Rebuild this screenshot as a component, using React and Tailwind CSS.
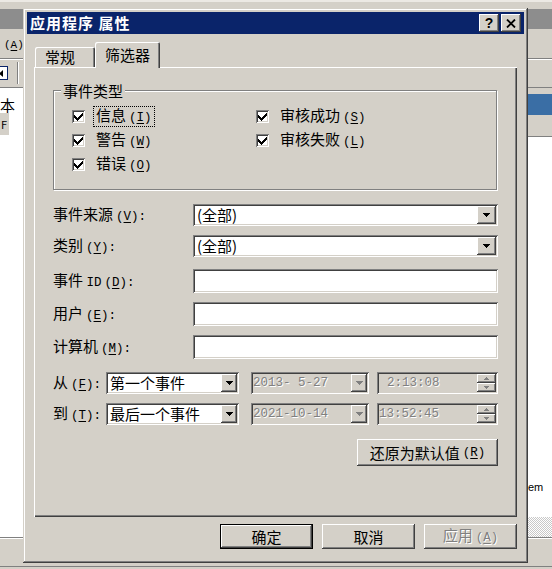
import React from 'react';

// classic 3D borders
const raised = 'shadow-[inset_-1px_-1px_0_#404040,inset_1px_1px_0_#ffffff,inset_-2px_-2px_0_#808080,inset_2px_2px_0_#d4d0c8]';
const sunken = 'shadow-[inset_1px_1px_0_#808080,inset_-1px_-1px_0_#ffffff,inset_2px_2px_0_#404040,inset_-2px_-2px_0_#d4d0c8]';
const dim = 'text-[#808080] [text-shadow:1px_1px_0_#ffffff]';

// mnemonic like (V):
const Key = ({ k, tail = '' }) => (
  <span className="ml-[3px] font-['Liberation_Mono',monospace] text-[12.5px]">
    (<span className="underline underline-offset-[2px]">{k}</span>){tail}
  </span>
);

const Arrow = ({ color = '#000000' }) => (
  <svg width="7" height="4" viewBox="0 0 7 4">
    <path d="M0 0h7v1h-1v1h-1v1h-1v1h-1v-1h-1v-1h-1v-1h-1z" fill={color} />
  </svg>
);

const Check = () => (
  <svg width="13" height="13" viewBox="0 0 13 13">
    <path d="M2 5h1v3H2z M3 6h1v3H3z M4 7h1v3H4z M5 8h1v3H5z M6 7h1v3H6z M7 6h1v3H7z M8 5h1v3H8z M9 4h1v3H9z M10 3h1v3h-1z" fill="#000000" />
  </svg>
);

const CheckItem = ({ label, k, focused }) => (
  <div className="flex items-center h-[24px]">
    <div className={`w-[13px] h-[13px] bg-white shrink-0 ${sunken}`}>
      <Check />
    </div>
    <span className={`ml-[8px] px-[2px] leading-[16px] border border-dotted ${focused ? 'border-black' : 'border-transparent'}`}>
      {label}
      <Key k={k} />
    </span>
  </div>
);

const DropBtn = ({ className, disabled }) => (
  <div className={`bg-[#d4d0c8] flex items-center justify-center shrink-0 ${raised} ${className}`}>
    <Arrow color={disabled ? '#808080' : '#000000'} />
  </div>
);

const Row = ({ children, className = '' }) => (
  <div className={`flex items-center ${className}`}>{children}</div>
);

const TitleBar = () => (
  <div className="h-[22px] bg-[#0a246a] flex items-center pl-[3px] pr-[3px]">
    <span className="text-white font-bold text-[15px] tracking-[1px]">应用程序 属性</span>
    <div className="ml-auto flex gap-[2px]">
      <div className={`w-[20px] h-[18px] bg-[#d4d0c8] flex items-center justify-center font-['Liberation_Sans',sans-serif] font-bold text-[14px] leading-none ${raised}`}>
        ?
      </div>
      <div className={`w-[20px] h-[18px] bg-[#d4d0c8] flex items-center justify-center ${raised}`}>
        <svg width="10" height="9" viewBox="0 0 10 9">
          <path d="M1 0.5l8 8M9 0.5l-8 8" stroke="#000000" strokeWidth="1.8" />
        </svg>
      </div>
    </div>
  </div>
);

const Spinner = () => (
  <div className="flex flex-col shrink-0">
    <div className={`w-[19px] h-[9px] bg-[#d4d0c8] flex items-center justify-center ${raised}`}>
      <svg width="5" height="3" viewBox="0 0 5 3"><path d="M2 0h1v1h1v1h1v1H0V2h1V1h1z" fill="#808080" /></svg>
    </div>
    <div className={`w-[19px] h-[9px] bg-[#d4d0c8] flex items-center justify-center ${raised}`}>
      <svg width="5" height="3" viewBox="0 0 5 3"><path d="M0 0h5v1H4v1H3v1H2V2H1V1H0z" fill="#808080" /></svg>
    </div>
  </div>
);

const FromToRow = ({ label, k, event, date, time, timePad, className }) => (
  <Row className={`h-[22px] ${className}`}>
    <span className="w-[53px] shrink-0">{label}<Key k={k} tail=":" /></span>
    <div className={`w-[133px] h-[22px] bg-white flex items-center pl-[4px] pr-[2px] ${sunken}`}>
      <span>{event}</span>
      <DropBtn className="ml-auto w-[16px] h-[18px]" />
    </div>
    <div className={`ml-[12px] w-[118px] h-[22px] bg-[#d4d0c8] flex items-center pl-[2px] pr-[2px] ${sunken}`}>
      <span className={`whitespace-pre font-['Liberation_Mono',monospace] text-[12.5px] ${dim}`}>{date}</span>
      <DropBtn className="ml-auto w-[16px] h-[18px]" disabled />
    </div>
    <div className={`ml-[8px] flex-1 h-[22px] bg-[#d4d0c8] flex items-center pr-[2px] ${timePad} ${sunken}`}>
      <span className={`font-['Liberation_Mono',monospace] text-[12.5px] ${dim}`}>{time}</span>
      <div className="ml-auto"><Spinner /></div>
    </div>
  </Row>
);

const FilterPanel = () => (
  <div className="h-[450px] pt-[23px] px-[19px] flex flex-col shadow-[inset_1px_1px_0_#ffffff,inset_-1px_-1px_0_#404040,inset_-2px_-2px_0_#808080]">
    {/* event types group */}
    <div className="relative h-[100px] mr-[1px] border border-[#808080] shadow-[inset_1px_1px_0_#ffffff,1px_1px_0_#ffffff]">
      <span className="absolute left-[7px] -top-[9px] px-[2px] bg-[#d4d0c8] leading-[18px]">事件类型</span>
      <div className="pt-[13px] pl-[18px] grid grid-cols-[184px_1fr]">
        <CheckItem label="信息" k="I" focused />
        <CheckItem label="审核成功" k="S" />
        <CheckItem label="警告" k="W" />
        <CheckItem label="审核失败" k="L" />
        <CheckItem label="错误" k="O" />
      </div>
    </div>

    <Row className="mt-[14px] h-[22px]">
      <span className="w-[140px] shrink-0">事件来源<Key k="V" tail=":" /></span>
      <div className={`flex-1 h-[22px] bg-white flex items-center pl-[4px] pr-[2px] ${sunken}`}>
        <span>(全部)</span>
        <DropBtn className="ml-auto w-[19px] h-[18px]" />
      </div>
    </Row>
    <Row className="mt-[9px] h-[22px]">
      <span className="w-[140px] shrink-0">类别<Key k="Y" tail=":" /></span>
      <div className={`flex-1 h-[22px] bg-white flex items-center pl-[4px] pr-[2px] ${sunken}`}>
        <span>(全部)</span>
        <DropBtn className="ml-auto w-[19px] h-[18px]" />
      </div>
    </Row>
    <Row className="mt-[12px] h-[24px]">
      <span className="w-[140px] shrink-0">事件 <span className="font-['Liberation_Mono',monospace] text-[12.5px]">ID</span><Key k="D" tail=":" /></span>
      <div className={`flex-1 h-[24px] bg-white ${sunken}`} />
    </Row>
    <Row className="mt-[9px] h-[24px]">
      <span className="w-[140px] shrink-0">用户<Key k="E" tail=":" /></span>
      <div className={`flex-1 h-[24px] bg-white ${sunken}`} />
    </Row>
    <Row className="mt-[9px] h-[24px]">
      <span className="w-[140px] shrink-0">计算机<Key k="M" tail=":" /></span>
      <div className={`flex-1 h-[24px] bg-white ${sunken}`} />
    </Row>

    <FromToRow className="mt-[13px]" label="从" k="F" event="第一个事件" date="2013- 5-27" time="2:13:08" timePad="pl-[10px]" />
    <FromToRow className="mt-[9px]" label="到" k="T" event="最后一个事件" date="2021-10-14" time="13:52:45" timePad="pl-[2px]" />

    <div className={`mt-[14px] self-end w-[141px] h-[27px] bg-[#d4d0c8] flex items-center justify-center ${raised}`}>
      还原为默认值<Key k="R" />
    </div>
  </div>
);

const FilterDialog = () => (
  <div className="absolute left-[23px] top-[8px] w-[505px] h-[555px] bg-[#d4d0c8] p-[4px] flex flex-col shadow-[inset_-1px_-1px_0_#404040,inset_1px_1px_0_#d4d0c8,inset_-2px_-2px_0_#808080,inset_2px_2px_0_#ffffff]">
    <TitleBar />
    <div className="mt-[8px] px-[7px] flex flex-col">
      {/* tabs */}
      <div className="h-[25px] flex items-end pl-[1px]">
        <div className="w-[60px] h-[20px] rounded-t-[2px] flex items-center pl-[10px] shadow-[inset_1px_1px_0_#ffffff,inset_-1px_0_0_#404040,inset_-2px_0_0_#808080]">
          常规
        </div>
        <div className="relative z-10 w-[65px] h-[26px] -mb-[1px] rounded-t-[2px] bg-[#d4d0c8] flex items-center pl-[10px] pb-[1px] shadow-[inset_1px_1px_0_#ffffff,inset_-1px_0_0_#404040,inset_-2px_0_0_#808080]">
          筛选器
        </div>
      </div>
      <FilterPanel />
      {/* dialog buttons */}
      <div className="mt-[7px] flex justify-end gap-[9px]">
        <div className="w-[93px] h-[25px] flex items-center justify-center shadow-[inset_0_0_0_1px_#000000,inset_-2px_-2px_0_#404040,inset_2px_2px_0_#ffffff,inset_-3px_-3px_0_#808080]">
          确定
        </div>
        <div className={`w-[93px] h-[25px] flex items-center justify-center ${raised}`}>取消</div>
        <div className={`w-[93px] h-[25px] flex items-center justify-center ${raised}`}>
          <span className={dim}>应用<Key k="A" /></span>
        </div>
      </div>
    </div>
  </div>
);

// the event viewer window behind the dialog
const BackgroundWindow = () => (
  <div className="flex flex-col h-full">
    <div className="h-[9px] border-t-2 border-[#ece9e4]" />
    <div className="h-[20px] bg-[#8d8d8d]" />
    <div className="h-[29px] flex items-center pt-[3px]">
      <span className="pl-[4px] whitespace-nowrap font-['Liberation_Mono',monospace] text-[11px]">
        (<span className="underline underline-offset-[2px]">A</span>)
      </span>
    </div>
    <div className="h-[2px] border-t border-[#808080] border-b border-b-white" />
    <div className="h-[26px] flex items-center overflow-hidden">
      <div className="-ml-[6px] w-[14px] h-[14px] border border-[#0a246a] bg-white flex items-center justify-center">
        <svg width="4" height="7" viewBox="0 0 4 7"><path d="M4 0v7L0 3.5z" fill="#000000" /></svg>
      </div>
      <div className="ml-[9px] w-[2px] h-[22px] border-l border-[#808080] border-r border-r-white" />
    </div>
    <div className="h-[2px] border-b border-[#808080]" />
    <div className="flex-1 flex">
      <div className="w-[23px] bg-white">
        <div className="h-[25px] pt-[8px] leading-[17px]">本</div>
        <div className="w-[9px] h-[22px] bg-[#d4d0c8] text-[11px] leading-[22px] pl-[1px]">F</div>
      </div>
      <div className="flex-1 bg-white" />
      <div className="w-[24px] flex flex-col">
        <div className="h-[6px]" />
        <div className="h-[21px] bg-[#3a6ea5]" />
        <div className="h-[22px] border-b border-[#808080]" />
        <div className="flex-1 bg-white flex flex-col justify-end pb-[24px]">
          <span className="font-['Liberation_Sans',sans-serif] text-[11px] leading-none">em</span>
        </div>
        <div className="h-[20px] bg-[repeating-conic-gradient(#c8c8c8_0%_25%,#ffffff_0%_50%)] bg-[length:2px_2px]" />
      </div>
    </div>
    <div className="h-[32px] border-t border-[#808080] flex flex-col">
      <div className="h-px bg-white" />
      <div className="flex-1" />
      <div className="h-px bg-[#808080] mb-[2px]" />
    </div>
  </div>
);

export default function App() {
  return (
    <div className="relative w-[552px] h-[569px] overflow-hidden bg-[#d4d0c8] font-['Noto_Sans_CJK_SC',sans-serif] text-[15px] leading-[18px] text-black">
      <BackgroundWindow />
      <FilterDialog />
    </div>
  );
}
